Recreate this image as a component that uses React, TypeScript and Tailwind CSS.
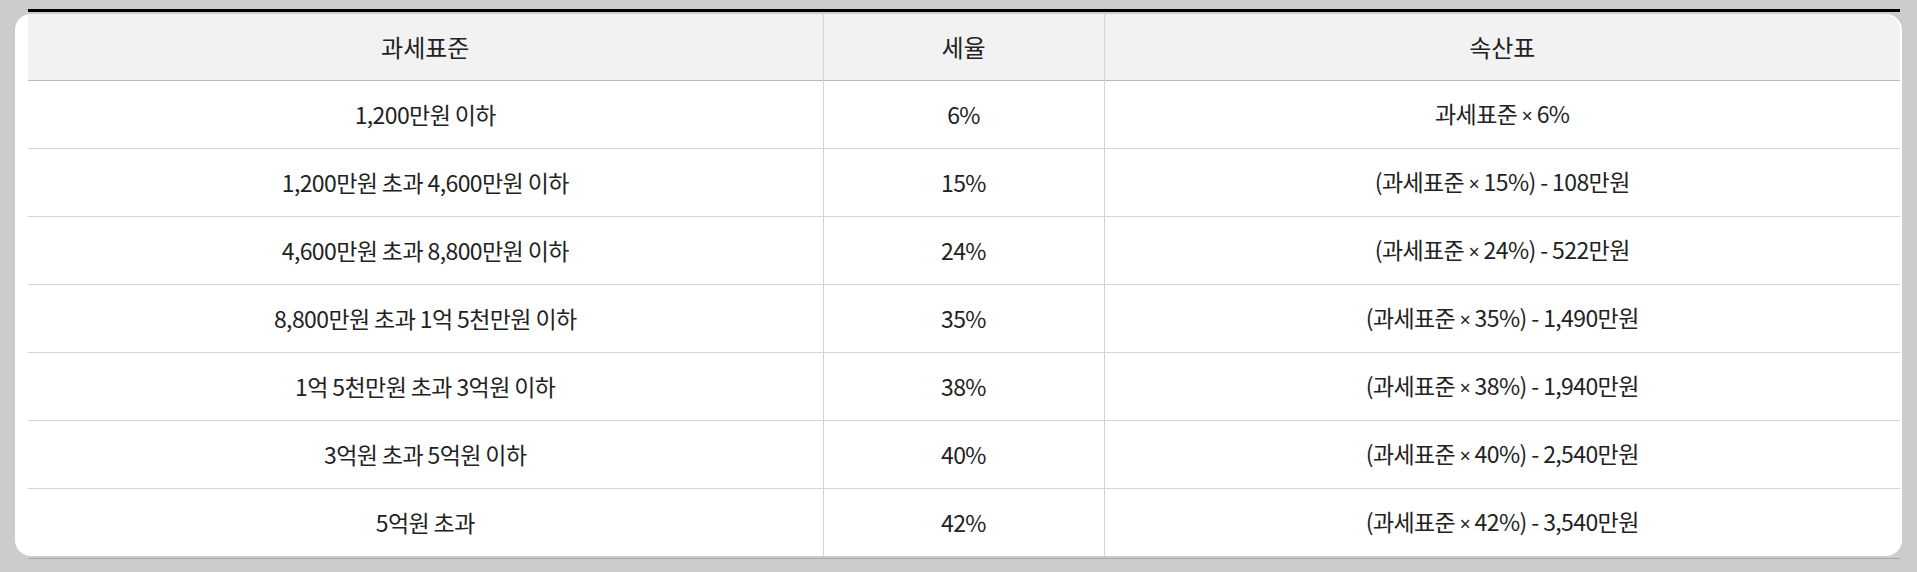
const rows = [
  ["1,200만원 이하", "6%", "과세표준 × 6%"],
  ["1,200만원 초과 4,600만원 이하", "15%", "(과세표준 × 15%) - 108만원"],
  ["4,600만원 초과 8,800만원 이하", "24%", "(과세표준 × 24%) - 522만원"],
  ["8,800만원 초과 1억 5천만원 이하", "35%", "(과세표준 × 35%) - 1,490만원"],
  ["1억 5천만원 초과 3억원 이하", "38%", "(과세표준 × 38%) - 1,940만원"],
  ["3억원 초과 5억원 이하", "40%", "(과세표준 × 40%) - 2,540만원"],
  ["5억원 초과", "42%", "(과세표준 × 42%) - 3,540만원"],
];

// the × sign is narrower in a latin face than in the CJK one
function Formula({ text }: { text: string }) {
  const parts = text.split("×");
  if (parts.length < 2) return <>{text}</>;
  return (
    <>
      {parts[0]}
      <span className="font-['Noto_Sans'] text-[19px]">×</span>
      {parts[1]}
    </>
  );
}

export default function App() {
  return (
    <div
      className="w-full h-[572px] bg-[#cccccc] pt-[9px] text-[#222222] text-[23px]"
      style={{ fontFamily: '"Noto Sans CJK KR", "Noto Sans", sans-serif' }}
    >
      {/* top rule */}
      <div className="ml-[28px] w-[1872px] h-[3px] bg-black" />

      {/* card */}
      <div className="mt-[2px] ml-[15px] w-[1887px] bg-white rounded-[16px] pl-[13px] pr-[2px] overflow-hidden">
        <table className="w-[1872px] border-collapse table-fixed">
          <colgroup>
            <col className="w-[795px]" />
            <col className="w-[281px]" />
            <col className="w-[796px]" />
          </colgroup>
          <thead>
            <tr className="h-[66px] bg-[#f2f2f2] border-b border-[#bbbbbb]">
              <th className="font-normal text-center text-[24px] leading-[30px] text-[#222222]">과세표준</th>
              <th className="font-normal text-center text-[24px] leading-[30px] text-[#222222] border-l border-[#d4d4d4]">세율</th>
              <th className="font-normal text-center text-[24px] leading-[30px] text-[#222222] border-l border-[#d4d4d4] rounded-tr-[16px]">속산표</th>
            </tr>
          </thead>
          <tbody>
            {rows.map((r, i) => (
              <tr
                key={i}
                className={`h-[68px] ${i < rows.length - 1 ? "border-b border-[#d4d4d4]" : ""}`}
              >
                <td className="text-center text-[23px] leading-[30px] tracking-[-0.6px] text-[#222222]">{r[0]}</td>
                <td className="text-center text-[23px] leading-[30px] tracking-[-0.6px] text-[#222222] border-l border-[#d4d4d4]">{r[1]}</td>
                <td className="text-center text-[23px] leading-[30px] tracking-[-0.6px] text-[#222222] border-l border-[#d4d4d4]">
                  <Formula text={r[2]} />
                </td>
              </tr>
            ))}
          </tbody>
        </table>
      </div>

      {/* bottom rule under card */}
      <div className="mt-[2px] ml-[28px] w-[1872px] h-[1px] bg-[#a8a8a8]" />
    </div>
  );
}
